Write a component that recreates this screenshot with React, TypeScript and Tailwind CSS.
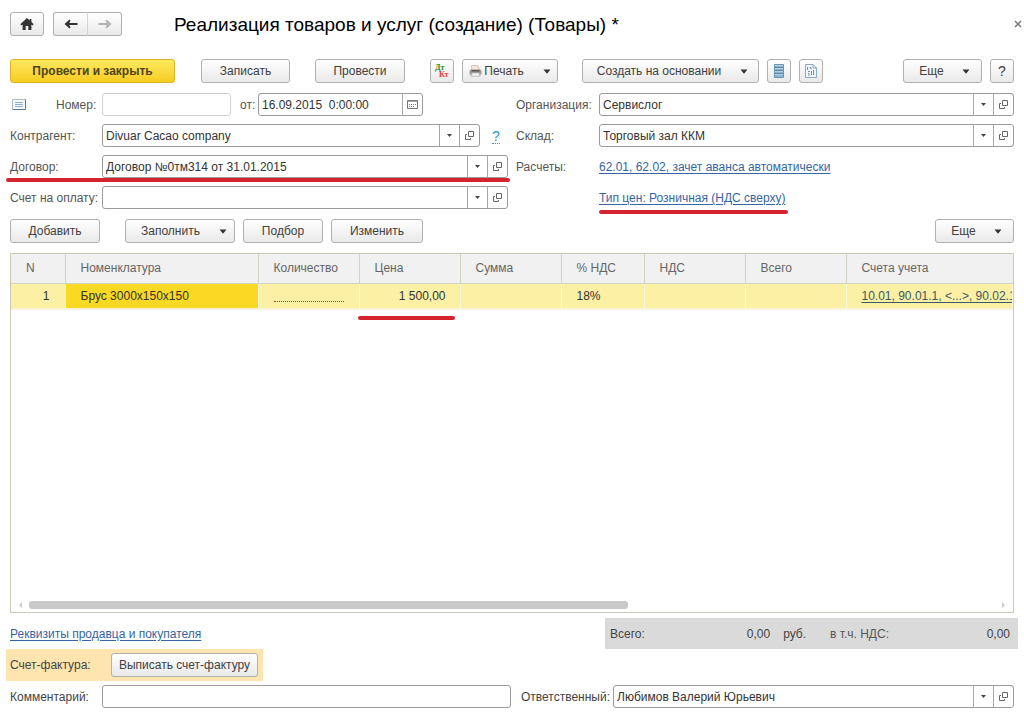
import React from "react";

const BTN =
  "flex h-6 shrink-0 items-center justify-center rounded-[3px] border border-[#b0b0b0] bg-gradient-to-b from-white to-[#e9e9e9] text-[#404040]";
const LINK = "text-[#3565a4] underline underline-offset-2";

interface ButtonProps {
  className: string;
  children: React.ReactNode;
  label?: string;
}

function Button({ className, children, label }: ButtonProps) {
  return (
    <button type="button" aria-label={label} className={`${BTN} ${className}`}>
      {children}
    </button>
  );
}

function Caret() {
  return (
    <svg width="8" height="5" viewBox="0 0 8 5" className="shrink-0">
      <path d="M0.5 0.5h7L4 4.8z" fill="#333" />
    </svg>
  );
}

function MoreButton() {
  return (
    <Button className="w-[79px] gap-[18px] pl-1">
      Еще
      <Caret />
    </Button>
  );
}

interface FieldProps {
  id: string;
  value?: string;
  className?: string;
  children?: React.ReactNode;
}

function Field({ id, value = "", className = "border-[#9b9b9b]", children }: FieldProps) {
  return (
    <div className={`flex h-[23px] min-w-0 overflow-hidden rounded-[3px] border bg-white ${className}`}>
      <input
        id={id}
        type="text"
        defaultValue={value}
        className="min-w-0 flex-1 bg-transparent px-[3px] text-[#333] outline-none"
      />
      {children}
    </div>
  );
}

function SelectField(props: FieldProps) {
  return (
    <Field {...props}>
      <button
        type="button"
        aria-label="Выбрать"
        className="flex w-5 items-center justify-center border-l border-[#a8a8a8]"
      >
        <svg width="5" height="3" viewBox="0 0 5 3">
          <path d="M0 0h5L2.5 3z" fill="#444" />
        </svg>
      </button>
      <button
        type="button"
        aria-label="Открыть"
        className="flex w-5 items-center justify-center border-l border-[#a8a8a8]"
      >
        <svg width="9" height="9" viewBox="0 0 9 9" fill="none" stroke="#666">
          <path d="M3.5 0.5h5v5h-5z" />
          <path d="M2 3.5H0.5v5h5V7" />
        </svg>
      </button>
    </Field>
  );
}

function RedLine({ className }: { className: string }) {
  return <span className={`pointer-events-none absolute h-1 rounded-full bg-[#d5232f] ${className}`} />;
}

const columns = [
  { title: "N", width: "w-[54px]" },
  { title: "Номенклатура", width: "w-[193px]" },
  { title: "Количество", width: "w-[101px]" },
  { title: "Цена", width: "w-[101px]" },
  { title: "Сумма", width: "w-[101px]" },
  { title: "% НДС", width: "w-[83px]" },
  { title: "НДС", width: "w-[101px]" },
  { title: "Всего", width: "w-[101px]" },
  { title: "Счета учета", width: "" },
];

function TitleBar() {
  return (
    <header className="flex items-center">
      <Button label="Начало" className="w-[34px]">
        <svg width="14" height="12" viewBox="0 0 14 12">
          <path d="M7 0 0.3 6.2l1.200 1.200L2.600 6.500V12H5.700V8H8.300V12H11.400V6.500l1.100.900 1.200-1.200L11.400 4.100V1H9.600V2.400z" fill="#333" />
        </svg>
      </Button>
      <div className="ml-[9px] flex">
        <Button label="Назад" className="w-[35px] rounded-r-none border-r-[#d4d4d4]">
          <svg width="14" height="10" viewBox="0 0 14 10">
            <path d="M0.500 5 5.500 0.500 6.500 1.500 5.300 4h8.200v2H5.300L6.500 8.500 5.500 9.500z" fill="#333" />
          </svg>
        </Button>
        <Button label="Вперед" className="w-[34px] rounded-l-none border-l-0">
          <svg width="14" height="10" viewBox="0 0 14 10">
            <path d="M13.500 5 8.500 0.500 7.500 1.500 8.700 4H0.500v2h8.200L7.500 8.500 8.500 9.500z" fill="#b3b3b3" />
          </svg>
        </Button>
      </div>
      <h1 className="ml-[52px] pt-[2px] text-[19px] leading-6 text-black">
        Реализация товаров и услуг (создание) (Товары) *
      </h1>
      <button type="button" aria-label="Закрыть" className="-mr-2 ml-auto">
        <svg width="8" height="8" viewBox="0 0 8 8" stroke="#777" strokeWidth="1.500">
          <path d="M1 1l6 6M7 1 1 7" />
        </svg>
      </button>
    </header>
  );
}

function Toolbar() {
  return (
    <div className="mt-[22px] flex items-center">
      <button
        type="button"
        className="h-6 w-[165px] rounded-[3px] border border-[#dcb42c] bg-gradient-to-b from-[#ffe95c] to-[#f6cc1c] font-bold text-[#4f4416]"
      >
        Провести и закрыть
      </button>
      <Button className="ml-[26px] w-[89px]">Записать</Button>
      <Button className="ml-[25px] w-[90px]">Провести</Button>
      <Button label="Дт Кт" className="ml-[25px] w-6">
        <svg width="16" height="16" viewBox="0 0 16 16" fontWeight="bold" fontSize="8" className="shrink-0">
          <text x="1" y="7" fill="#2c8a2c" className="font-['Liberation_Serif',serif]">Дт</text>
          <text x="5" y="14" fill="#e03c32" className="font-['Liberation_Serif',serif]">Кт</text>
        </svg>
      </Button>
      <Button className="ml-2 w-24">
        <svg width="13" height="12" viewBox="0 0 13 12" className="mr-[2px] shrink-0">
          <path d="M2.500 0.500h6.500L10.500 5h-8z" fill="#f6e4d4" stroke="#c9b8a8" strokeWidth="0.700" />
          <path d="M1.500 4.500h10l1 1.500v3.500h-12V6z" fill="#a09b98" />
          <path d="M2.500 5h8v1.500h-8z" fill="#5a5654" />
          <path d="M0.500 9.500h12L11 11.500H2z" fill="#c4c0bc" />
          <path d="M3 8h7l0.500 3h-8z" fill="#f4f4f4" stroke="#aaa" strokeWidth="0.500" />
        </svg>
        Печать
        <span className="ml-[19px]">
          <Caret />
        </span>
      </Button>
      <Button className="ml-6 w-[177px] gap-[19px] pl-1">
        Создать на основании
        <Caret />
      </Button>
      <Button label="Структура подчиненности" className="ml-2 w-6">
        <svg width="10" height="14" viewBox="0 0 10 14">
          <path d="M0.500 0.500h9v13h-9z" fill="#8fb4d0" stroke="#6d95b3" />
          <path d="M1 3.500h8M1 6.500h8M1 9.500h8" stroke="#5c86a5" />
          <path d="M1 1.500h8M1 4.500h8M1 7.500h8M1 10.500h8" stroke="#b4d0e4" />
        </svg>
      </Button>
      <Button label="Отчет" className="ml-2 w-6">
        <svg width="12" height="14" viewBox="0 0 12 14" fill="none">
          <path d="M0.500 0.500h7.500l3.500 3.500v9.500h-11z" fill="#f1f7fc" stroke="#8ba9c2" />
          <path d="M8 0.500V4h3.500" stroke="#8ba9c2" />
          <path d="M2.500 3v3M4.500 3.500h1.500v2M8.500 6v5M3 7.500h2M3 9.500h1M6.500 7v4M3 11h2" stroke="#6f94b0" />
        </svg>
      </Button>
      <div className="ml-auto flex gap-2">
        <MoreButton />
        <Button label="Справка" className="w-6 text-[14px]">?</Button>
      </div>
    </div>
  );
}

function DocumentForm() {
  return (
    <div className="mt-[10px] grid grid-cols-2 gap-2 text-[#555]">
      <div className="flex flex-col gap-2">
        <div className="flex items-center">
          <svg width="15" height="11" viewBox="0 0 15 11" className="ml-[2px] shrink-0">
            <path d="M0.500 0.500h13v10h-13z" fill="#f5fafd" stroke="#a9bccb" />
            <path d="M13.500 0.500v10H1" fill="none" stroke="#5c7890" />
            <path d="M3 3.500h8M3 5.500h8M3 7.500h8" stroke="#8fb0c8" />
          </svg>
          <label htmlFor="number" className="w-[75px] pl-[29px]">Номер:</label>
          <Field id="number" className="w-[129px] border-[#cfcfcf]" />
          <label htmlFor="date" className="w-[27px] pl-[9px]">от:</label>
          <Field id="date" value={"16.09.2015\u00a0 0:00:00"} className="w-[165px] border-[#9b9b9b]">
            <button
              type="button"
              aria-label="Календарь"
              className="flex w-5 items-center justify-center border-l border-[#a8a8a8]"
            >
              <svg width="11" height="9" viewBox="0 0 11 9" fill="none" stroke="#777">
                <path d="M0.500 0.500h10v8h-10z" />
                <path d="M1 1.500h9" stroke="#aaa" />
                <path d="M2 4.500h7M2 6.500h5" strokeDasharray="1 1" />
              </svg>
            </button>
          </Field>
        </div>
        <div className="flex items-center">
          <label htmlFor="partner" className="w-[92px] shrink-0">Контрагент:</label>
          <SelectField id="partner" value="Divuar Cacao company" className="flex-1 border-[#9b9b9b]" />
          <a href="#help" className="ml-1 w-6 text-center text-[14px] leading-4 text-[#2a9bc4]">
            <span className="inline-block border-b border-dotted border-[#2a9bc4] leading-[13px]">?</span>
          </a>
        </div>
        <div className="relative flex items-center">
          <label htmlFor="contract" className="w-[92px] shrink-0">Договор:</label>
          <SelectField id="contract" value="Договор №0тм314 от 31.01.2015" className="flex-1 border-[#9b9b9b]" />
          <RedLine className="-right-[2px] -left-1 top-[23px]" />
        </div>
        <div className="flex items-center">
          <label htmlFor="invoice" className="w-[92px] shrink-0 whitespace-nowrap">Счет на оплату:</label>
          <SelectField id="invoice" className="flex-1 border-[#9b9b9b]" />
        </div>
      </div>
      <div className="flex flex-col gap-2">
        <div className="flex items-center">
          <label htmlFor="company" className="w-[83px] shrink-0">Организация:</label>
          <SelectField id="company" value="Сервислог" className="flex-1 border-[#9b9b9b]" />
        </div>
        <div className="flex items-center">
          <label htmlFor="store" className="w-[83px] shrink-0">Склад:</label>
          <SelectField id="store" value="Торговый зал ККМ" className="flex-1 border-[#9b9b9b]" />
        </div>
        <div className="flex h-[23px] items-center">
          <span className="w-[83px] shrink-0">Расчеты:</span>
          <a href="#settlements" className={LINK}>62.01, 62.02, зачет аванса автоматически</a>
        </div>
        <div className="flex h-[23px] items-center pl-[83px]">
          <a href="#prices" className={`relative ${LINK}`}>
            Тип цен: Розничная (НДС сверху)
            <RedLine className="-right-[2px] left-0 top-5" />
          </a>
        </div>
      </div>
    </div>
  );
}

function GoodsTable() {
  return (
    <div className="mt-[10px] flex flex-1 flex-col overflow-hidden border border-[#c9c9b4]">
      <table className="w-full table-fixed border-collapse">
        <thead>
          <tr className="h-[29px] bg-[#f1f1f1] text-left text-[#666]">
            {columns.map((c) => (
              <th
                key={c.title}
                className={`${c.width} border-r border-b border-[#d3d3c4] pl-[15px] font-normal last:border-r-0`}
              >
                {c.title}
              </th>
            ))}
          </tr>
        </thead>
        <tbody>
          <tr className="h-[26px] border-b-2 border-[#f6f3dc] bg-[#fbf0a4] text-[#333] [&>td]:border-r [&>td]:border-[#fdf9dc]">
            <td className="pr-[15px] text-right">1</td>
            <td className="bg-[#f9d923] pl-[15px]">Брус 3000х150х150</td>
            <td className="px-[15px]">
              <span className="block h-3 border-b border-dotted border-[#c8321e]" />
            </td>
            <td className="relative pr-[14px] text-right">
              1 500,00
              <RedLine className="-left-[2px] right-[5px] top-8" />
            </td>
            <td />
            <td className="pl-[15px]">18%</td>
            <td />
            <td />
            <td className="overflow-hidden pl-[15px] whitespace-nowrap">
              <a href="#accounts" className="text-[#3b5b66] underline underline-offset-2">
                10.01, 90.01.1, &lt;...&gt;, 90.02.1
              </a>
            </td>
          </tr>
        </tbody>
      </table>
      <div className="mt-auto mb-[3px] flex h-2 items-center px-2">
        <svg width="3" height="6" viewBox="0 0 3 6"><path d="M3 0v6L0 3z" fill="#ccc" /></svg>
        <div className="mx-[7px] flex-1">
          <div className="h-2 w-[62%] rounded-[3px] bg-[#c9c9c9]" />
        </div>
        <svg width="3" height="6" viewBox="0 0 3 6"><path d="M0 0v6l3-3z" fill="#ccc" /></svg>
      </div>
    </div>
  );
}

export default function App() {
  return (
    <div className="flex min-h-screen flex-col bg-white px-[10px] pt-[11px] pb-2 font-['Liberation_Sans',Arial,sans-serif] text-[12px] leading-4">
      <TitleBar />
      <Toolbar />
      <DocumentForm />
      <div className="mt-[10px] flex items-center">
        <Button className="w-[90px]">Добавить</Button>
        <Button className="ml-[25px] w-[110px] gap-[19px] pl-2">
          Заполнить
          <Caret />
        </Button>
        <Button className="ml-2 w-20">Подбор</Button>
        <Button className="ml-2 w-[92px]">Изменить</Button>
        <div className="ml-auto">
          <MoreButton />
        </div>
      </div>
      <GoodsTable />
      <div className="mt-[5px] -mr-1 flex h-[31px] items-center justify-between">
        <a href="#details" className={LINK}>Реквизиты продавца и покупателя</a>
        <div className="flex h-full w-[413px] items-center bg-[#dadada] pr-2 pl-[5px] text-[#444]">
          <span>Всего:</span>
          <span className="flex-1 text-right">0,00</span>
          <span className="ml-[13px]">руб.</span>
          <span className="ml-6 text-[#555]">в т.ч. НДС:</span>
          <span className="w-[121px] text-right">0,00</span>
        </div>
      </div>
      <div className="-ml-1 flex h-8 w-[257px] items-center bg-[#fee4ae] pl-1 text-[#444]">
        <span className="w-[101px]">Счет-фактура:</span>
        <Button className="w-[147px]">Выписать счет-фактуру</Button>
      </div>
      <div className="mt-1 grid grid-cols-[92px_409fr_102px_401fr] items-center text-[#444]">
        <label htmlFor="comment">Комментарий:</label>
        <Field id="comment" />
        <label htmlFor="manager" className="pl-[10px]">Ответственный:</label>
        <SelectField id="manager" value="Любимов Валерий Юрьевич" />
      </div>
    </div>
  );
}
